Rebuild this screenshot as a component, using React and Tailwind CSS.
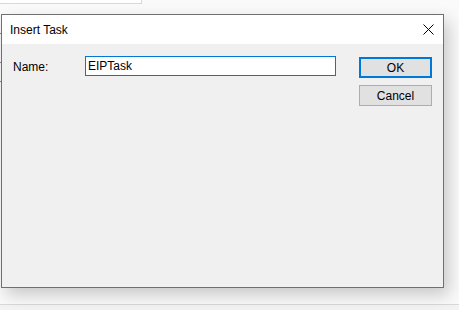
import React from 'react';

const font = { fontFamily: '"Liberation Sans", Arial, sans-serif' };

const App = () => {
  return (
    <div className="relative w-[459px] h-[310px] overflow-hidden bg-[#fafafa]" style={font}>
      {/* backdrop bits */}
      <div className="absolute left-0 top-0 w-[142px] h-[4px] bg-white border-b border-r border-[#d8d8d8]" />
      <div className="absolute left-0 top-[33px] w-[2px] h-px bg-[#888]" />
      <div className="absolute left-0 top-[62px] w-[2px] h-px bg-[#888]" />
      <div className="absolute left-0 top-[81px] w-[2px] h-px bg-[#888]" />
      <div className="absolute left-0 right-0 top-[304px] bottom-0 bg-[#f3f3f3] border-t border-[#d9d9d9]" />

      {/* dialog window */}
      <div className="absolute left-[1px] top-[14px] w-[443px] h-[274px] flex flex-col border border-[#707070] bg-[#f0f0f0] shadow-[5px_7px_16px_rgba(0,0,0,0.2)]">
        <div className="h-[29px] bg-white flex items-center justify-between pl-[8px] pr-[9px]">
          <span className="text-[12px] text-black">Insert Task</span>
          <svg width="11" height="11" viewBox="0 0 11 11" className="text-black">
            <path d="M0.5 0.5 L10.5 10.5 M10.5 0.5 L0.5 10.5" stroke="currentColor" strokeWidth="1" fill="none" />
          </svg>
        </div>

        <div className="flex pt-[12px] pl-[11px]">
          <div className="w-[72px] h-[20px] flex items-center text-[12px] text-black pt-[1px]">Name:</div>
          <div className="w-[251px] h-[20px] border border-[#0078d7] bg-white flex items-center px-[2px] text-[12px] text-black">
            EIPTask
          </div>
          <div className="ml-[23px] flex flex-col gap-[7px] pt-[1px]">
            <button className="w-[73px] h-[21px] border-2 border-[#0078d7] bg-[#e1e1e1] text-[12px] text-black flex items-center justify-center">
              OK
            </button>
            <button className="w-[73px] h-[21px] border border-[#adadad] bg-[#e1e1e1] text-[12px] text-black flex items-center justify-center">
              Cancel
            </button>
          </div>
        </div>
      </div>
    </div>
  );
};

export default App;
